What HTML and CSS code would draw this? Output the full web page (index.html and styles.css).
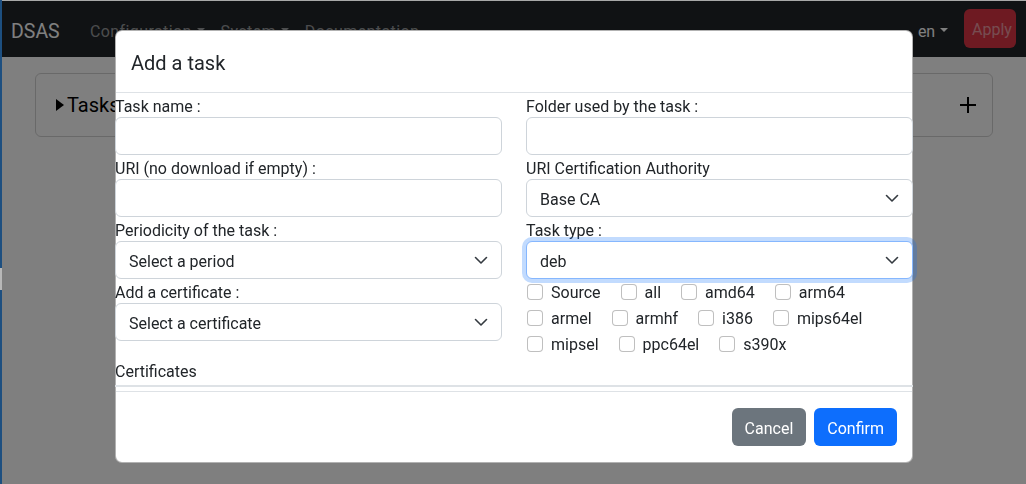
FILE: index.html
```html
<!DOCTYPE html>
<html lang="en">
<head>
<meta charset="utf-8">
<title>DSAS</title>
<link rel="stylesheet" href="styles.css">
</head>
<body>
<nav class="navbar">
  <a class="brand">DSAS</a>
  <ul class="nav">
    <li class="nav-link dropdown">Configuration</li>
    <li class="nav-link dropdown">System</li>
    <li class="nav-link">Documentation</li>
  </ul>
  <div class="nav-right">
    <span class="nav-link lang dropdown">en</span>
    <button class="btn btn-apply">Apply</button>
  </div>
</nav>

<main class="page">
  <div class="card">
    <div class="card-head">
      <span class="disclosure"></span>
      <span class="card-title">Tasks</span>
      <svg class="plus" width="18" height="18" viewBox="0 0 18 18" aria-hidden="true">
        <path d="M9 1v16M1 9h16" stroke="#000" stroke-width="2" fill="none"/>
      </svg>
    </div>
  </div>
</main>

<div class="backdrop"></div>

<div class="modal">
  <div class="modal-dialog">
    <div class="modal-header">
      <h5 class="modal-title">Add a task</h5>
    </div>
    <div class="modal-body">
      <div class="form-grid">
        <div class="col">
          <label class="form-label">Task name :</label>
          <input class="form-control" type="text">
          <label class="form-label">URI (no download if empty) :</label>
          <input class="form-control" type="text">
          <label class="form-label">Periodicity of the task :</label>
          <div class="form-select"><span>Select a period</span><svg class="chev" width="16" height="16" viewBox="0 0 16 16"><path d="m2.5 5.5 5.5 5.5 5.5-5.5" fill="none" stroke="#343a40" stroke-width="1.6" stroke-linecap="round" stroke-linejoin="round"/></svg></div>
          <label class="form-label">Add a certificate :</label>
          <div class="form-select"><span>Select a certificate</span><svg class="chev" width="16" height="16" viewBox="0 0 16 16"><path d="m2.5 5.5 5.5 5.5 5.5-5.5" fill="none" stroke="#343a40" stroke-width="1.6" stroke-linecap="round" stroke-linejoin="round"/></svg></div>
        </div>
        <div class="col">
          <label class="form-label">Folder used by the task :</label>
          <input class="form-control" type="text">
          <label class="form-label">URI Certification Authority</label>
          <div class="form-select"><span>Base CA</span><svg class="chev" width="16" height="16" viewBox="0 0 16 16"><path d="m2.5 5.5 5.5 5.5 5.5-5.5" fill="none" stroke="#343a40" stroke-width="1.6" stroke-linecap="round" stroke-linejoin="round"/></svg></div>
          <label class="form-label">Task type :</label>
          <div class="form-select focus"><span>deb</span><svg class="chev" width="16" height="16" viewBox="0 0 16 16"><path d="m2.5 5.5 5.5 5.5 5.5-5.5" fill="none" stroke="#343a40" stroke-width="1.6" stroke-linecap="round" stroke-linejoin="round"/></svg></div>
          <div class="checks">
            <div class="check-row">
              <label class="check"><span class="box"></span><span class="check-text">Source</span></label>
              <label class="check"><span class="box"></span><span class="check-text">all</span></label>
              <label class="check"><span class="box"></span><span class="check-text">amd64</span></label>
              <label class="check"><span class="box"></span><span class="check-text">arm64</span></label>
            </div>
            <div class="check-row">
              <label class="check"><span class="box"></span><span class="check-text">armel</span></label>
              <label class="check"><span class="box"></span><span class="check-text">armhf</span></label>
              <label class="check"><span class="box"></span><span class="check-text">i386</span></label>
              <label class="check"><span class="box"></span><span class="check-text">mips64el</span></label>
            </div>
            <div class="check-row">
              <label class="check"><span class="box"></span><span class="check-text">mipsel</span></label>
              <label class="check"><span class="box"></span><span class="check-text">ppc64el</span></label>
              <label class="check"><span class="box"></span><span class="check-text">s390x</span></label>
            </div>
          </div>
        </div>
      </div>
      <div class="certs-label">Certificates</div>
      <div class="certs-rule"></div>
    </div>
    <div class="modal-footer">
      <button class="btn btn-secondary">Cancel</button>
      <button class="btn btn-primary">Confirm</button>
    </div>
  </div>
</div>

<div class="edge-top"></div>
<div class="edge-left"></div>
</body>
</html>
```
FILE: styles.css
```css
* { box-sizing: border-box; }

html, body { height: 100%; }

body {
  margin: 0;
  background: #fff;
  color: #212529;
  font-family: Roboto, "Liberation Sans", sans-serif;
  font-size: 16px;
  line-height: 24px;
  overflow: hidden;
}

/* ---------- navbar ---------- */
.navbar {
  margin-top: 1px;
  height: 56px;
  background: #212529;
  display: flex;
  align-items: center;
  padding: 0 10px 0 11px;
}

.brand {
  flex: 0 0 71px;
  color: #fff;
  font-size: 19.5px;
  line-height: 30px;
  padding-top: 5px;
}

.nav {
  list-style: none;
  margin: 0;
  padding: 0;
  display: flex;
  flex: 1;
}

.nav-link {
  color: rgba(255, 255, 255, 0.55);
  padding: 5px 8px 0;
  white-space: nowrap;
  letter-spacing: 0.4px;
}

.dropdown::after {
  content: "";
  display: inline-block;
  margin-left: 0.3em;
  vertical-align: 0.255em;
  border-top: 0.3em solid;
  border-left: 0.3em solid transparent;
  border-right: 0.3em solid transparent;
}

.nav-right {
  display: flex;
  align-items: center;
  gap: 8px;
}

.nav-link.lang { color: #fff; letter-spacing: 0; }

.btn {
  font-family: inherit;
  font-size: 16px;
  line-height: 24px;
  border: 1px solid transparent;
  border-radius: 6px;
  padding: 8px 12px 4px;
  height: 38px;
  cursor: pointer;
}

.btn-apply {
  background: #dc3545;
  color: rgba(255, 255, 255, 0.5);
  padding: 7px 7px 5px;
  width: 52px;
  height: 39px;
  margin-top: -1px;
}

/* ---------- page ---------- */
.page {
  padding: 16px 33px 0 35px;
}

.card {
  border: 1px solid rgba(0, 0, 0, 0.175);
  border-radius: 6px;
}

.card-head {
  display: flex;
  align-items: center;
  padding: 16px 15px 16px 20px;
}

.disclosure {
  width: 0;
  height: 0;
  border-top: 6px solid transparent;
  border-bottom: 6px solid transparent;
  border-left: 8px solid #000;
  margin-right: 3px;
}

.card-title {
  flex: 1;
  font-size: 20px;
  line-height: 30px;
  color: #000;
}

.plus { display: block; }

/* ---------- modal ---------- */
.backdrop {
  position: fixed;
  inset: 0;
  background: rgba(0, 0, 0, 0.5);
}

.modal {
  position: fixed;
  inset: 0;
  padding: 30px 0 0 2px;
}

.modal-dialog {
  width: 798px;
  margin: 0 auto;
  background: #fff;
  border: 1px solid rgba(0, 0, 0, 0.3);
  border-radius: 7px;
}

.modal-header {
  padding: 17px 16px 14px 15px;
  border-bottom: 1px solid #dee2e6;
}

.modal-title {
  margin: 0;
  font-size: 20px;
  line-height: 30px;
  font-weight: 400;
}

.modal-body {
  margin: 0 -1px;
  padding-bottom: 4px;
}

.form-grid {
  display: grid;
  grid-template-columns: 1fr 1fr;
  column-gap: 24px;
}

.col { display: flex; flex-direction: column; }

.form-label {
  display: block;
  line-height: 24px;
  height: 24px;
  padding-top: 2px;
}

.form-control,
.form-select {
  display: block;
  width: 100%;
  height: 38px;
  border: 1px solid #ced4da;
  border-radius: 6px;
  background: #fff;
  font-family: inherit;
  font-size: 16px;
  color: #212529;
  padding: 6px 12px;
  margin: 0;
}

.form-select {
  display: flex;
  align-items: center;
  justify-content: space-between;
  padding: 0 12px 0 13px;
}

.form-select span { padding-top: 4px; }

.form-select.focus {
  border-color: #86b7fe;
  box-shadow: 0 0 0 4px rgba(13, 110, 253, 0.25);
}

.chev { display: block; flex: none; }

.checks { padding-top: 1px; }

.check-row {
  display: flex;
  gap: 20px;
  height: 24px;
  margin-bottom: 2px;
  padding-left: 1px;
}

.check {
  display: flex;
  align-items: center;
  gap: 8px;
}

.check-text { padding-top: 2px; }

.box {
  width: 16px;
  height: 16px;
  border: 1px solid rgba(0, 0, 0, 0.25);
  border-radius: 4px;
  background: #fff;
}

.certs-label {
  line-height: 24px;
  height: 24px;
  padding-top: 2px;
  margin-bottom: 3px;
}

.certs-rule {
  height: 2px;
  background: #dee2e6;
}

.modal-footer {
  border-top: 1px solid #dee2e6;
  display: flex;
  justify-content: flex-end;
  gap: 8px;
  padding: 16px 15px 16px 16px;
}

.btn-secondary { background: #6c757d; color: #fff; }
.btn-primary { background: #0d6efd; color: #fff; }

/* ---------- screen edges ---------- */
.edge-top {
  position: fixed;
  top: 0;
  left: 0;
  right: 0;
  height: 1px;
  background: #a8a8a8;
}

.edge-left {
  position: fixed;
  top: 0;
  left: 0;
  bottom: 0;
  width: 2px;
  background: linear-gradient(#1d4f80 0 268px, #b8b8b8 268px 290px, #1d4f80 290px);
}
```
